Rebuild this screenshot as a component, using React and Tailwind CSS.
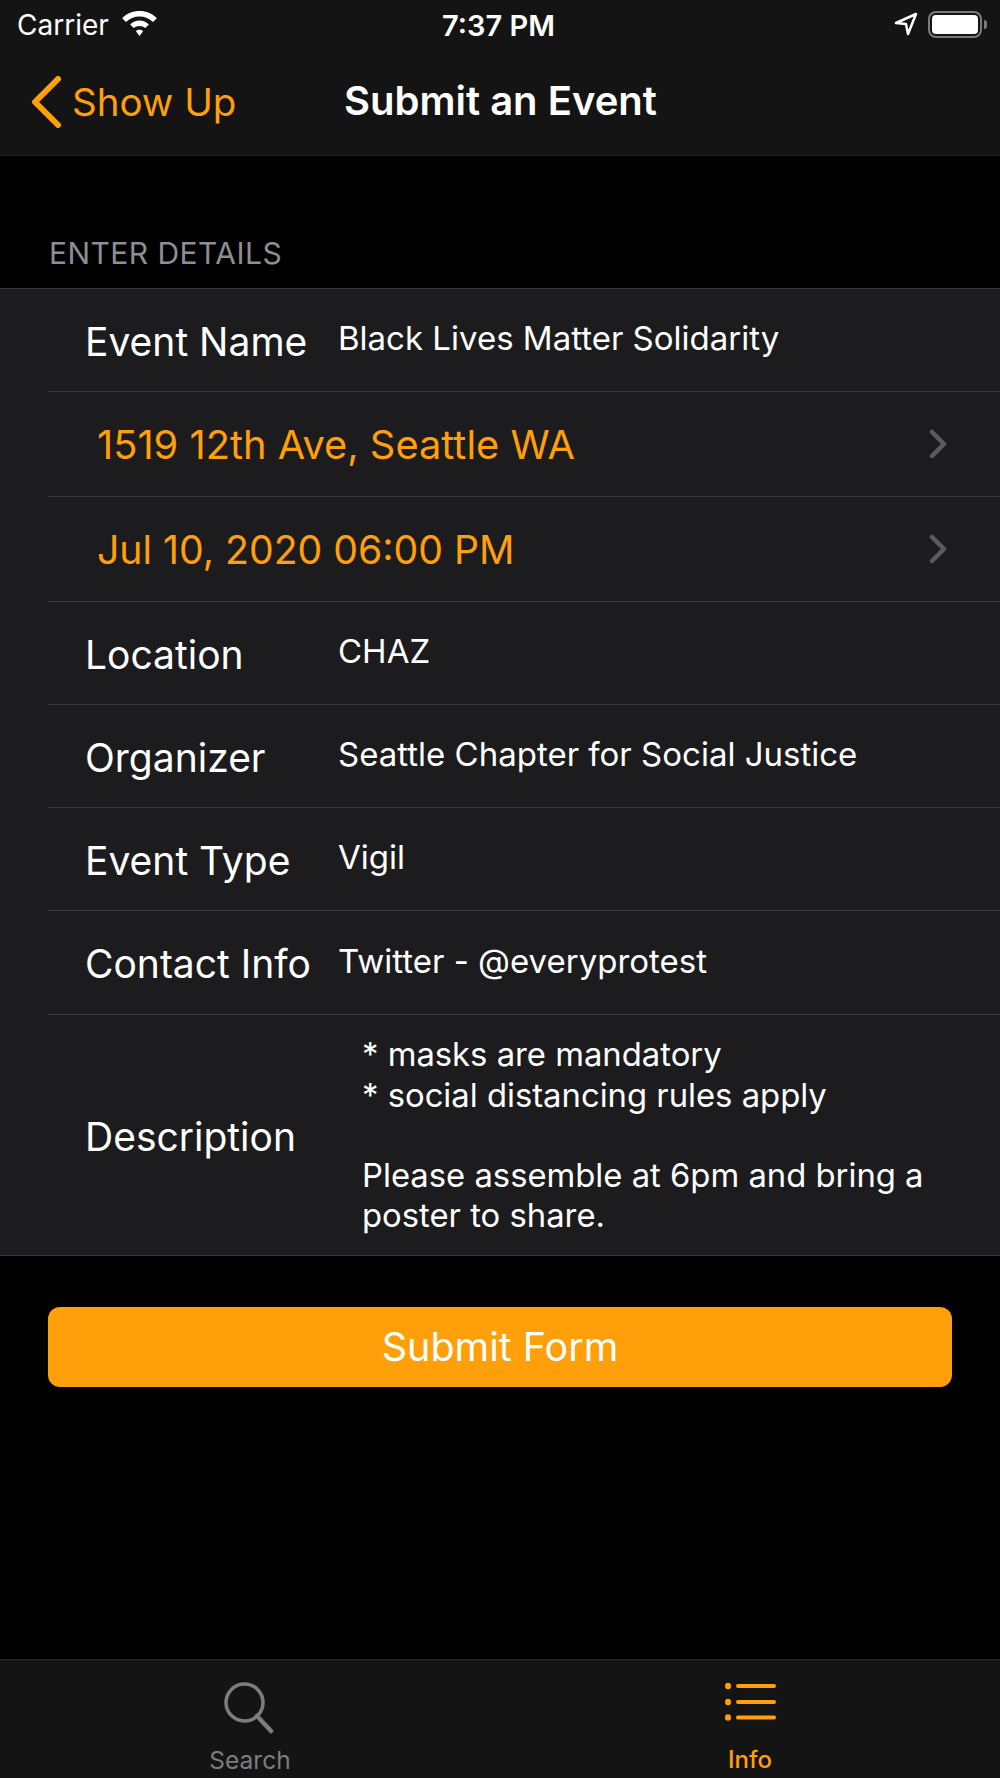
import React from 'react';

const F = "font-['Inter','Liberation_Sans',sans-serif]";

function Row({ label, value, h }) {
  return (
    <div className={`${h} flex border-b border-[#38383a] ml-12 items-center`}>
      <div className="w-[290px] shrink-0 pl-[37px] pt-[2px] text-[39px] leading-none text-white whitespace-nowrap">{label}</div>
      <div className="text-[33px] leading-none text-white -mt-[3px] whitespace-nowrap">{value}</div>
    </div>
  );
}

function LinkRow({ value, h, size }) {
  return (
    <div className={`${h} flex border-b border-[#38383a] ml-12 items-center justify-between pr-[51px]`}>
      <div className={`pl-[49px] pt-[2px] ${size} leading-none text-[#ff9f0a]`}>{value}</div>
      <svg width="20" height="30" viewBox="0 0 20 30" fill="none" stroke="#5b5b5f" strokeWidth="4.5" strokeLinecap="round" strokeLinejoin="round"><path d="M3 3 L15 15 L3 27" /></svg>
    </div>
  );
}

export default function App() {
  return (
    <div className={`w-[1000px] h-[1778px] bg-black flex flex-col ${F}`}>
      <div className="h-[156px] bg-[#141414] border-b border-[#1f1f1f] shrink-0">
        <div className="h-[48px] relative flex items-center justify-between pl-[17px] pr-[13px] text-white">
          <div className="flex items-center gap-[12px]">
            <span className="text-[28px] leading-none mt-[2px]">Carrier</span>
            <svg className="mt-[-1px]" width="37" height="27" viewBox="0 0 38 28" fill="white">
              <path d="M19 1C12 1 6 3.500 1 8.500L5 12.500C8.800 8.800 13.600 6.800 19 6.800C24.400 6.800 29.200 8.800 33 12.500L37 8.500C32 3.500 26 1 19 1Z" />
              <path d="M19 11C15.500 11 12 12.300 9.300 15L13 18.700C14.600 17.200 16.700 16.500 19 16.500C21.300 16.500 23.400 17.200 25 18.700L28.700 15C26 12.300 22.500 11 19 11Z" />
              <path d="M19 20.500C17.500 20.500 16.300 21 15.300 22L19 27L22.700 22C21.700 21 20.500 20.500 19 20.500Z" />
            </svg>
          </div>
          <span className="absolute left-[442px] top-[11px] text-[29px] leading-none font-semibold">7:37 PM</span>
          <div className="flex items-center gap-[10px]">
            <svg width="24" height="24" viewBox="0 0 24 24" fill="none" stroke="white" strokeWidth="2.500" strokeLinejoin="round"><path d="M2 11 L22 2 L14 22 L12 12 Z" /></svg>
            <div className="flex items-center gap-[2px]">
              <div className="w-[54px] h-[27px] rounded-[8px] border-[2px] border-[#7a7a7a] p-[2px]"><div className="w-full h-full bg-white rounded-[4px]" /></div>
              <div className="w-[3px] h-[9px] bg-[#7a7a7a] rounded-r-full" />
            </div>
          </div>
        </div>
        <div className="h-[107px] flex items-center relative">
          <svg className="ml-[31px] shrink-0" width="30" height="52" viewBox="0 0 30 52" fill="none" stroke="#ff9f0a" strokeWidth="6" strokeLinecap="round" strokeLinejoin="round"><path d="M27 3 L4 26 L27 49" /></svg>
          <span className="ml-[11px] pt-[2px] text-[38.500px] leading-none text-[#ff9f0a]">Show Up</span>
          <span className="absolute left-[344px] top-[33px] text-[40px] leading-none font-semibold text-white whitespace-nowrap">Submit an Event</span>
        </div>
      </div>

      <div className="h-[132px] shrink-0 flex items-end pl-[49px] pb-[20px] text-[30px] leading-none tracking-[0.45px] text-[#8e8e93]">ENTER DETAILS</div>

      <div className="bg-[#1c1c1e] border-y border-[#38383a] shrink-0">
        <Row h="h-[103px]" label="Event Name" value="Black Lives Matter Solidarity" />
        <LinkRow h="h-[105px]" size="text-[39.800px]" value="1519 12th Ave, Seattle WA" />
        <LinkRow h="h-[105px]" size="text-[39.200px]" value="Jul 10, 2020 06:00 PM" />
        <Row h="h-[103px]" label="Location" value="CHAZ" />
        <Row h="h-[103px]" label="Organizer" value="Seattle Chapter for Social Justice" />
        <Row h="h-[103px]" label="Event Type" value="Vigil" />
        <Row h="h-[104px]" label="Contact Info" value="Twitter - @everyprotest" />
        <div className="h-[240px] flex ml-12 items-center">
          <div className="w-[314px] shrink-0 pl-[37px] pt-[2px] text-[39px] leading-none text-white">Description</div>
          <div className="text-[32.800px] leading-[40.300px] text-white whitespace-nowrap">
            <div>* masks are mandatory</div>
            <div>* social distancing rules apply</div>
            <div className="h-[40px]" />
            <div>Please assemble at 6pm and bring a</div>
            <div>poster to share.</div>
          </div>
        </div>
      </div>

      <div className="px-12 pt-[51px] shrink-0">
        <div className="h-[80px] bg-[#ff9f0a] rounded-[12px] flex items-center justify-center pt-[2px] text-[39.500px] leading-none text-white">Submit Form</div>
      </div>

      <div className="flex-1" />

      <div className="h-[119px] bg-[#141414] border-t border-[#2a2a2a] shrink-0 flex">
        <div className="w-1/2 flex flex-col items-center pt-[22px]">
          <svg width="52" height="52" viewBox="0 0 52 52" fill="none" stroke="#7d7d7d" strokeWidth="3.500" strokeLinecap="round"><circle cx="20.500" cy="20.500" r="18.500" /><path d="M33 34 L47 49" strokeWidth="4.500" /></svg>
          <span className="mt-[14px] text-[24.500px] leading-none text-[#7d7d7d]">Search</span>
        </div>
        <div className="w-1/2 flex flex-col items-center pt-[22px]">
          <svg width="54" height="52" viewBox="0 0 54 52" fill="#ff9f0a"><ellipse cx="5" cy="4" rx="3" ry="3.300" /><ellipse cx="5" cy="20" rx="3" ry="3.300" /><ellipse cx="5" cy="35.500" rx="3" ry="3.300" /><rect x="13" y="2" width="40" height="4" rx="2" /><rect x="13" y="18" width="40" height="4" rx="2" /><rect x="13" y="33.500" width="40" height="4" rx="2" /></svg>
          <span className="mt-[14px] text-[24px] leading-none font-medium text-[#ff9f0a]">Info</span>
        </div>
      </div>
    </div>
  );
}
